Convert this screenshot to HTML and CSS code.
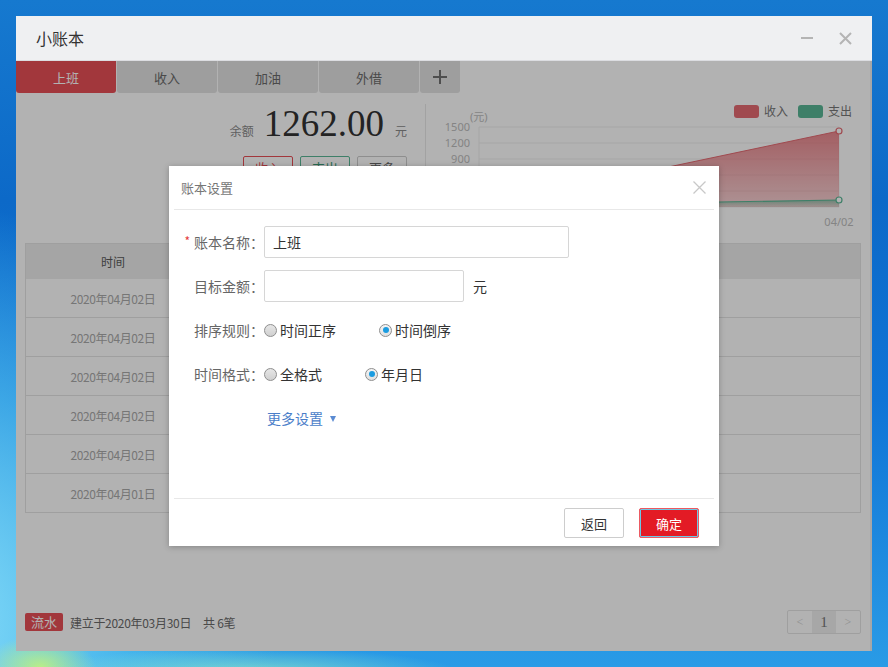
FILE: index.html
```html
<!DOCTYPE html>
<html lang="zh-CN">
<head>
<meta charset="utf-8">
<title>小账本</title>
<link rel="stylesheet" href="styles.css">
</head>
<body>
<div class="desktop">
  <div class="window">
    <div class="titlebar">
      <span class="app-title">小账本</span>
      <div class="win-controls">
        <span class="win-min"></span>
        <svg class="win-close" width="13" height="13" viewBox="0 0 13 13"><path d="M1 1L12 12M12 1L1 12" stroke="#b4b4b4" stroke-width="2" fill="none"/></svg>
      </div>
    </div>
    <div class="win-body">
      <div class="tabs">
        <div class="tab active">上班</div>
        <div class="tab">收入</div>
        <div class="tab">加油</div>
        <div class="tab">外借</div>
        <div class="tab tab-add"><svg width="14" height="14" viewBox="0 0 14 14"><path d="M7 0V14M0 7H14" stroke="#707070" stroke-width="2" fill="none"/></svg></div>
      </div>

      <div class="summary">
        <div class="balance">
          <div class="balance-line">
            <span class="bal-label">余额</span>
            <span class="bal-num">1262.00</span>
            <span class="bal-unit">元</span>
          </div>
          <div class="bal-actions">
            <span class="pill pill-income">收入</span>
            <span class="pill pill-expense">支出</span>
            <span class="pill pill-more">更多</span>
          </div>
        </div>
        <div class="divider"></div>
        <div class="chart">
          <svg width="444" height="150" viewBox="426 93 444 150">
            <defs>
              <linearGradient id="gRed" x1="0" y1="0" x2="0" y2="1">
                <stop offset="0" stop-color="#e56a72" stop-opacity="0.8"/>
                <stop offset="1" stop-color="#e56a72" stop-opacity="0.3"/>
              </linearGradient>
              <linearGradient id="gGreen" x1="0" y1="0" x2="0" y2="1">
                <stop offset="0" stop-color="#5ab795" stop-opacity="0.6"/>
                <stop offset="1" stop-color="#5ab795" stop-opacity="0.1"/>
              </linearGradient>
            </defs>
            <rect x="734" y="105" width="25" height="13" rx="3" fill="#e56a72"/>
            <text class="legend" x="764" y="116">收入</text>
            <rect x="798" y="105" width="25" height="13" rx="3" fill="#5ab795"/>
            <text class="legend" x="828" y="116">支出</text>
            <text class="axis" x="470" y="121">(元)</text>
            <g class="grid">
              <line x1="479" y1="127" x2="839" y2="127"/>
              <line x1="479" y1="143" x2="839" y2="143"/>
              <line x1="479" y1="159" x2="839" y2="159"/>
              <line x1="479" y1="175" x2="839" y2="175"/>
              <line x1="479" y1="191" x2="839" y2="191"/>
              <line x1="479" y1="207" x2="839" y2="207"/>
              <line x1="479" y1="127" x2="479" y2="207"/>
              <line x1="839" y1="127" x2="839" y2="207"/>
            </g>
            <text class="axis" x="470" y="131" text-anchor="end">1500</text>
            <text class="axis" x="470" y="147" text-anchor="end">1200</text>
            <text class="axis" x="470" y="163" text-anchor="end">900</text>
            <polygon points="479,207 839,131 839,207" fill="url(#gRed)"/>
            <polyline points="479,207 839,131" fill="none" stroke="#e56a72" stroke-width="1"/>
            <polygon points="479,206 839,200 839,207 479,207" fill="url(#gGreen)"/>
            <polyline points="479,206 839,200" fill="none" stroke="#5ab795" stroke-width="1.2"/>
            <circle cx="839" cy="131" r="3" fill="#fff" stroke="#e56a72" stroke-width="1.2"/>
            <circle cx="839" cy="200" r="3" fill="#fff" stroke="#5ab795" stroke-width="1.2"/>
            <text class="axis" x="839" y="226" text-anchor="middle">04/02</text>
          </svg>
        </div>
      </div>

      <div class="table">
        <div class="t-row t-head"><span>时间</span><span></span><span></span><span></span></div>
        <div class="t-row"><span>2020年04月02日</span><span></span><span></span><span></span></div>
        <div class="t-row"><span>2020年04月02日</span><span></span><span></span><span></span></div>
        <div class="t-row"><span>2020年04月02日</span><span></span><span></span><span></span></div>
        <div class="t-row"><span>2020年04月02日</span><span></span><span></span><span></span></div>
        <div class="t-row"><span>2020年04月02日</span><span></span><span></span><span></span></div>
        <div class="t-row"><span>2020年04月01日</span><span></span><span></span><span></span></div>
      </div>

      <div class="footer">
        <div class="footer-info">
          <span class="badge">流水</span>
          <span class="info-text">建立于2020年03月30日</span>
          <span class="info-count">共 6笔</span>
        </div>
        <div class="pager">
          <span class="pg">&lt;</span>
          <span class="pg pg-cur">1</span>
          <span class="pg">&gt;</span>
        </div>
      </div>

      <div class="mask">
        <div class="dialog">
          <div class="dlg-head">
            <span class="dlg-title">账本设置</span>
            <svg class="dlg-close" width="13" height="13" viewBox="0 0 13 13"><path d="M0.5 0.5L12.5 12.5M12.5 0.5L0.5 12.5" stroke="#c8c8c8" stroke-width="1.3" fill="none"/></svg>
          </div>
          <div class="dlg-body">
            <div class="f-row">
              <label class="f-label"><span class="req">*</span>账本名称：</label>
              <div class="f-input f-input-wide">上班</div>
            </div>
            <div class="f-row">
              <label class="f-label">目标金额：</label>
              <div class="f-input f-input-short"></div>
              <span class="f-unit">元</span>
            </div>
            <div class="f-row">
              <label class="f-label">排序规则：</label>
              <span class="opt"><span class="radio"></span>时间正序</span>
              <span class="opt"><span class="radio checked"></span>时间倒序</span>
            </div>
            <div class="f-row">
              <label class="f-label">时间格式：</label>
              <span class="opt"><span class="radio"></span>全格式</span>
              <span class="opt"><span class="radio checked"></span>年月日</span>
            </div>
            <div class="f-row">
              <span class="more-link">更多设置<span class="caret"></span></span>
            </div>
          </div>
          <div class="dlg-foot">
            <span class="btn btn-back">返回</span>
            <span class="btn btn-ok">确定</span>
          </div>
        </div>
      </div>
    </div>
  </div>
</div>
</body>
</html>
```
FILE: styles.css
```css
* { box-sizing: border-box; }

html, body {
  margin: 0;
  padding: 0;
}

body {
  width: 888px;
  height: 667px;
  overflow: hidden;
  font-family: "Noto Sans CJK SC", "Noto Sans", sans-serif;
  color: #333;
}

.desktop {
  width: 888px;
  height: 667px;
  padding: 16px;
  background:
    radial-gradient(ellipse 70px 40px at 40px 667px, rgba(190, 240, 130, 0.95), rgba(190, 240, 130, 0) 80%),
    radial-gradient(ellipse 260px 30px at 250px 672px, rgba(150, 235, 200, 0.7), rgba(150, 235, 200, 0) 80%),
    radial-gradient(ellipse 420px 520px at -60px 620px, rgba(140, 225, 250, 0.95), rgba(90, 200, 240, 0.6) 45%, rgba(60, 170, 235, 0) 80%),
    linear-gradient(180deg, #1679cf 0%, #0c69c8 30%, #0f74d6 60%, #2a9be6 100%);
}

.window {
  width: 856px;
  height: 635px;
  display: flex;
  flex-direction: column;
  background: #fff;
}

/* title bar */
.titlebar {
  height: 45px;
  flex: none;
  display: flex;
  align-items: center;
  justify-content: space-between;
  padding: 0 20px;
  background: #eff0f2;
  border-bottom: 1px solid #dcdde1;
}

.app-title {
  font-size: 16px;
  line-height: 20px;
  color: #333;
}

.win-controls {
  display: flex;
  align-items: center;
  gap: 26px;
}

.win-min {
  display: block;
  width: 12px;
  height: 2px;
  background: #b4b4b4;
}

.win-close { display: block; }

/* body */
.win-body {
  flex: 1;
  position: relative;
  display: flex;
  flex-direction: column;
  border-right: 2px solid #efefef;
}

.tabs {
  display: flex;
  gap: 1px;
  height: 32px;
  flex: none;
}

.tab {
  width: 100px;
  display: flex;
  align-items: center;
  justify-content: center;
  background: #e2e2e2;
  color: #6a6a6a;
  font-size: 13px;
  border-radius: 0 0 3px 3px;
}

.tab.active {
  background: #e94f57;
  color: #fff;
}

.tab-add { width: 40px; }
.tab-add svg { display: block; }

/* summary */
.summary {
  height: 150px;
  flex: none;
  display: flex;
}

.balance {
  width: 409px;
  display: flex;
  flex-direction: column;
  align-items: flex-end;
  padding: 11px 18px 0 0;
}

.balance-line {
  display: flex;
  align-items: baseline;
  height: 40px;
}

.bal-label {
  font-size: 12px;
  color: #8a8a8a;
  margin-right: 10px;
}

.bal-num {
  font-family: "Liberation Serif", "Times New Roman", serif;
  font-size: 37px;
  line-height: 40px;
  color: #333;
}

.bal-unit {
  font-size: 12px;
  color: #8a8a8a;
  margin-left: 11px;
}

.bal-actions {
  display: flex;
  gap: 7px;
  margin-top: 12px;
}

.pill {
  width: 50px;
  height: 22px;
  border: 1px solid #ccc;
  border-radius: 2px;
  display: flex;
  align-items: center;
  justify-content: center;
  font-size: 13px;
  color: #666;
}

.pill-income { border-color: #e94f57; color: #e94f57; }
.pill-expense { border-color: #5ab795; color: #3a9a76; }

.divider {
  width: 1px;
  margin: 11px 0;
  background: #e8e8e8;
}

.chart {
  flex: 1;
}

.chart svg { display: block; }

.legend {
  font-family: "Noto Sans CJK SC", sans-serif;
  font-size: 12px;
  fill: #777;
}

.axis {
  font-family: "Noto Sans", "Noto Sans CJK SC", sans-serif;
  font-size: 11px;
  fill: #bdbdbd;
}

.grid line {
  stroke: #eeeeee;
  stroke-width: 1;
}

/* table */
.table {
  margin: 0 9px;
  border: 1px solid #e4e4e4;
  flex: none;
}

.t-row {
  display: grid;
  grid-template-columns: 174px 1fr 1fr 140px;
  height: 39px;
  align-items: center;
  border-bottom: 1px solid #e4e4e4;
  font-size: 12px;
  letter-spacing: -0.4px;
  color: #aaa;
  text-align: center;
}

.t-row:last-child {
  border-bottom: none;
  height: 38px;
}

.t-head {
  height: 35px;
  background: #ececec;
  border-bottom: none;
  color: #5a5a5a;
  letter-spacing: 0;
}

/* footer */
.footer {
  margin: auto 9px 17px;
  height: 24px;
  display: flex;
  align-items: center;
  justify-content: space-between;
}

.footer-info {
  display: flex;
  align-items: center;
  font-size: 12px;
  color: #6a6a6a;
}

.info-text,
.info-count {
  letter-spacing: -0.3px;
}

.badge {
  height: 18px;
  padding: 0 6px;
  background: #e94f57;
  color: #fff;
  font-size: 13px;
  line-height: 18px;
  border-radius: 2px;
  margin-right: 7px;
}

.info-count { margin-left: 12px; }

.pager {
  display: flex;
  height: 24px;
  border: 1px solid #e4e4e4;
  border-radius: 2px;
}

.pg {
  width: 24px;
  display: flex;
  align-items: center;
  justify-content: center;
  font-family: "Liberation Serif", serif;
  font-size: 12px;
  color: #ccc;
}

.pg-cur {
  background: #f0f0f0;
  color: #777;
  font-size: 15px;
}

/* mask + dialog */
.mask {
  position: absolute;
  top: 0;
  left: 0;
  bottom: 0;
  right: -2px;
  background: rgba(0, 0, 0, 0.3);
  display: flex;
  align-items: center;
  justify-content: center;
}

.dialog {
  width: 550px;
  height: 380px;
  background: #fff;
  box-shadow: 0 1px 6px rgba(0, 0, 0, 0.25);
  display: flex;
  flex-direction: column;
}

.dlg-head {
  height: 44px;
  margin: 0 5px;
  padding: 0 8px 0 7px;
  border-bottom: 1px solid #e8e8e8;
  display: flex;
  align-items: center;
  justify-content: space-between;
}

.dlg-title {
  font-size: 13px;
  color: #777;
}

.dlg-close { display: block; }

.dlg-body {
  flex: 1;
  padding-top: 16px;
}

.f-row {
  display: flex;
  align-items: center;
  height: 32px;
  margin-bottom: 12px;
  font-size: 14px;
  line-height: 20px;
}

.f-label {
  width: 95px;
  text-align: right;
  color: #666;
  font-size: 14px;
}

.req {
  color: #e4393c;
  font-size: 12px;
  margin-right: 4px;
  position: relative;
  top: -2px;
}

.f-input {
  height: 32px;
  border: 1px solid #d6d6d6;
  border-radius: 2px;
  padding: 0 8px;
  display: flex;
  align-items: center;
  font-size: 14px;
  color: #333;
}

.f-input-wide { width: 305px; }
.f-input-short { width: 200px; }

.f-unit {
  margin-left: 9px;
  color: #333;
}

.opt {
  display: flex;
  align-items: center;
  color: #333;
  margin-right: 43px;
}

.radio {
  width: 13px;
  height: 13px;
  border-radius: 50%;
  border: 1px solid #8e8e8e;
  background: linear-gradient(180deg, #e6e6e6, #d0d0d0);
  margin-right: 3px;
  display: flex;
  align-items: center;
  justify-content: center;
}

.radio.checked {
  background: linear-gradient(180deg, #f4f4f4, #e0e0e0);
}

.radio.checked::after {
  content: "";
  width: 6px;
  height: 6px;
  border-radius: 50%;
  background: #1b9ce0;
}

.more-link {
  margin-left: 98px;
  color: #4a7ec9;
  font-size: 14px;
  display: flex;
  align-items: center;
}

.caret {
  width: 0;
  height: 0;
  margin-left: 7px;
  margin-top: 2px;
  border-left: 3.5px solid transparent;
  border-right: 3.5px solid transparent;
  border-top: 6px solid #5b8bd2;
}

.dlg-foot {
  height: 48px;
  margin: 0 5px;
  border-top: 1px solid #e8e8e8;
  display: flex;
  justify-content: flex-end;
  align-items: flex-start;
  padding: 9px 15px 0 0;
  gap: 15px;
}

.btn {
  width: 60px;
  height: 30px;
  border-radius: 2px;
  display: flex;
  align-items: center;
  justify-content: center;
  font-size: 13px;
}

.btn-back {
  border: 1px solid #cdcdcd;
  color: #333;
  background: #fff;
}

.btn-ok {
  background: #e31b25;
  color: #fff;
  border: 1px solid #ec5a62;
  box-shadow: inset 0 0 0 1px #6cc8e6;
}
```
